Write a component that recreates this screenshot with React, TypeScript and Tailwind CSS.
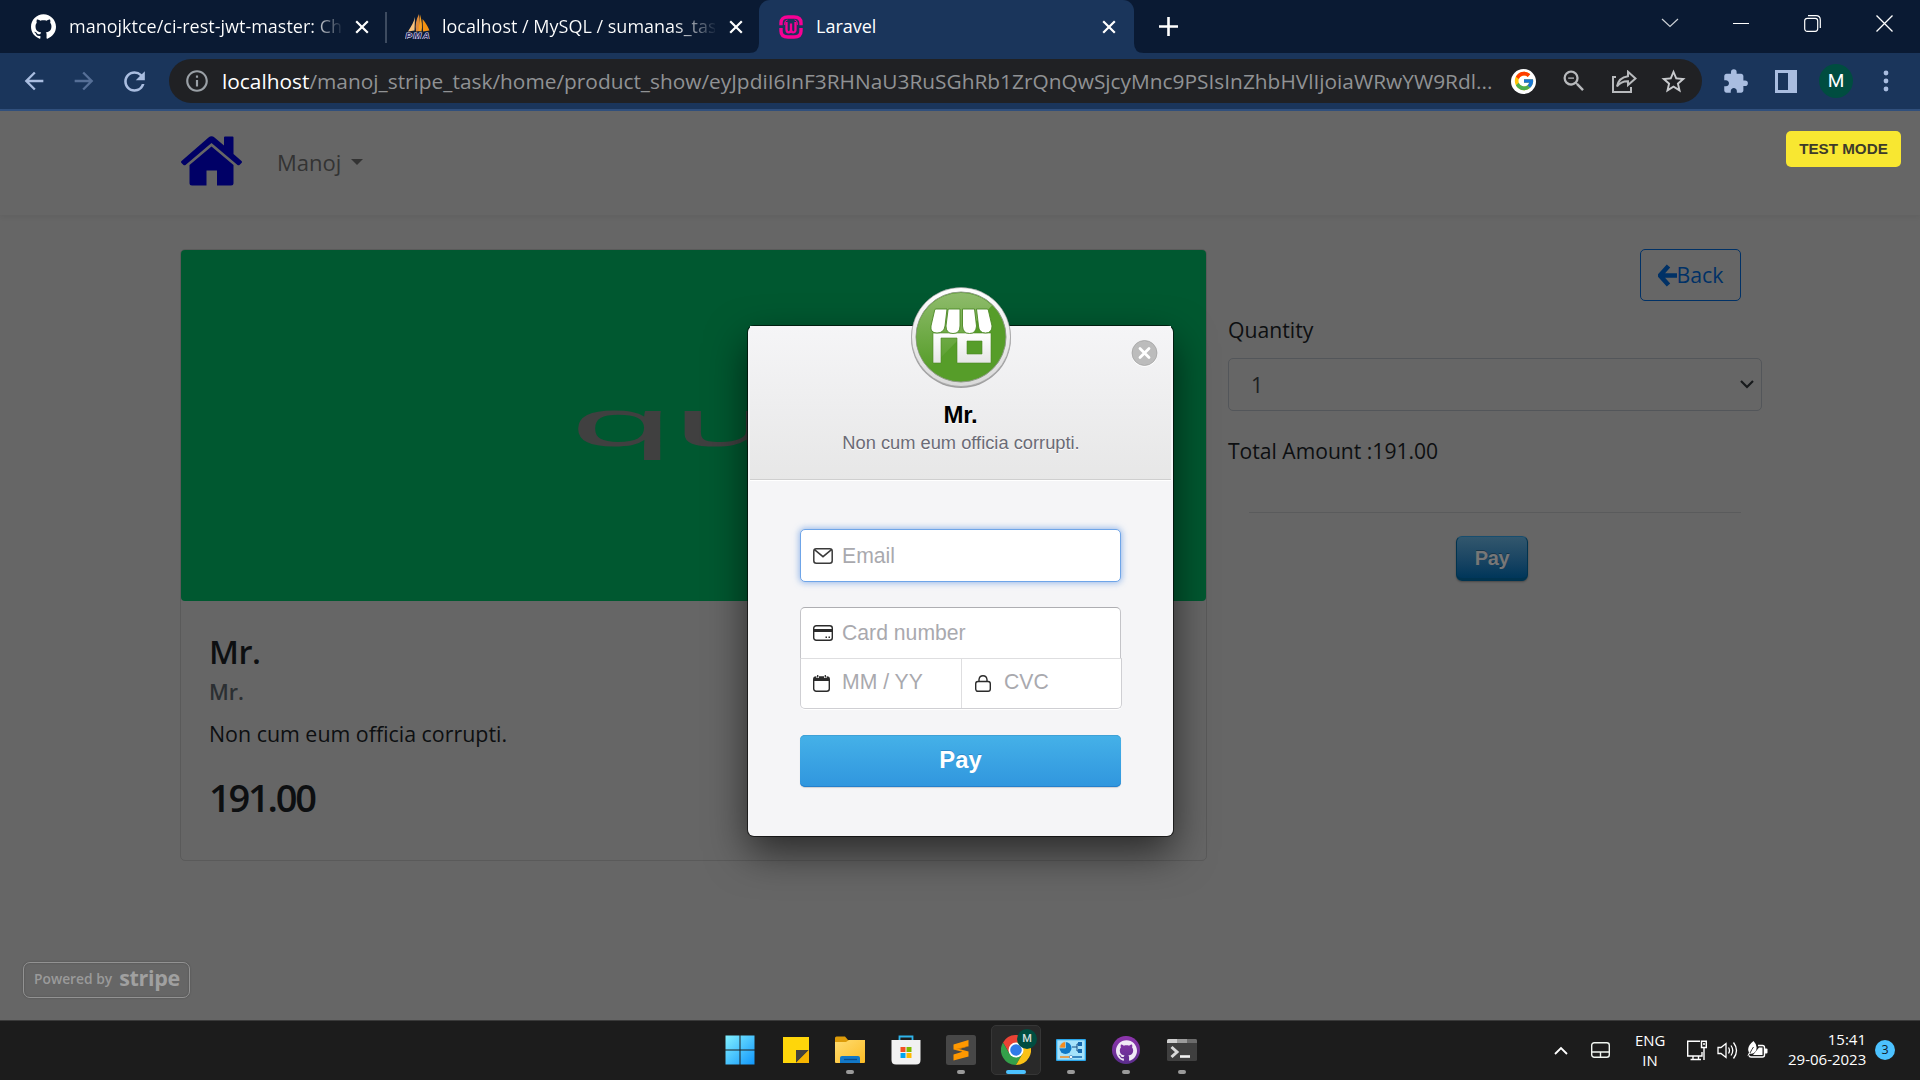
import React from 'react';
import { FaArrowLeft } from 'react-icons/fa';
import { SiGithub } from 'react-icons/si';
import { FcGoogle } from 'react-icons/fc';
import { MdArrowBack, MdArrowForward, MdExtension, MdInfoOutline, MdRefresh, MdStarBorder, MdZoomOut } from 'react-icons/md';

function CloseX() {
  return (
    <svg className="h-[14px] w-[14px] shrink-0" viewBox="0 0 14 14">
      <path d="M1.2 1.2 12.8 12.8M12.8 1.2 1.2 12.8" stroke="#fff" strokeWidth="2.2" />
    </svg>
  );
}

function PmaIcon() {
  return (
    <svg className="h-[25px] w-[25px] shrink-0" viewBox="0 0 25 25">
      <path d="M10 3C9 8 6.500 12 3 17.500L9.500 16.500Z" fill="#f9c27c" />
      <path d="M14 0C11 5.500 10 11 11 17.500L15 17Z" fill="#e08a3a" />
      <path d="M15 0.500C17 7 17.500 12 16.500 17.500L13.500 17Z" fill="#f7a020" />
      <path d="M17.500 5C21 9 23 13 24.500 16.500L18 17.500Z" fill="#f29111" />
      <text x="0.500" y="24.600" fontFamily="Liberation Sans" fontSize="9.500" fontWeight="700" fontStyle="italic" fill="#2a2a66" stroke="#d6d6ea" strokeWidth="1.200" paintOrder="stroke" textLength="24">PMA</text>
    </svg>
  );
}

function WampIcon() {
  return (
    <svg className="h-[24px] w-[24px] shrink-0" viewBox="0 0 24 24" fill="none" stroke="#f70094">
      <path d="M2 10.300V8Q2 2 9 2H15Q22 2 22 8V10.300" strokeWidth="3.400" />
      <path d="M2 13V16Q2 22 9 22H15Q22 22 22 16V13" strokeWidth="3.400" />
      <path d="M5.700 10V8Q6 5.200 8.500 5M18.300 10V8Q18 5.200 15.500 5" strokeWidth="1" />
      <path d="M7.500 7V14.500Q7.500 17.300 9.700 17.300T12 14.500V8.500M12 14.500Q12 17.300 14.300 17.300T16.500 14.500V7" strokeWidth="2.300" />
    </svg>
  );
}

function TabStrip() {
  return (
    <div className="flex h-[53px] bg-[#0a1a33] text-[18px] text-white">
      <div className="flex h-[53px] w-[385px] items-center pl-[31px]">
        <SiGithub className="h-[25px] w-[25px] shrink-0" />
        <span className="ml-[13px] w-[275px] overflow-hidden whitespace-nowrap bg-[linear-gradient(90deg,#fff_88%,#0a1a33_100%)] bg-clip-text text-transparent">
          manojktce/ci-rest-jwt-master: Ch
        </span>
        <span className="ml-[11px]"><CloseX /></span>
      </div>
      <div className="mt-[12px] h-[31px] w-[2px] bg-[#3d4b60]" />
      <div className="flex h-[53px] w-[362px] items-center pl-[18px]">
        <PmaIcon />
        <span className="ml-[12px] w-[273px] overflow-hidden whitespace-nowrap bg-[linear-gradient(90deg,#fff_85%,#0a1a33_101%)] bg-clip-text text-transparent">
          localhost / MySQL / sumanas_tas
        </span>
        <span className="ml-[14px]"><CloseX /></span>
      </div>
      <svg className="h-[53px] w-[10px]" viewBox="0 0 10 53"><path d="M10 43V53H0Q10 53 10 43Z" fill="#1a355b" /></svg>
      <div className="flex h-[53px] w-[375px] items-center rounded-t-[11px] bg-[#1a355b] pl-[20px]">
        <WampIcon />
        <span className="ml-[13px] w-[280px]">Laravel</span>
        <span className="ml-[6px]"><CloseX /></span>
      </div>
      <svg className="h-[53px] w-[10px]" viewBox="0 0 10 53"><path d="M0 43V53H10Q0 53 0 43Z" fill="#1a355b" /></svg>
      <svg className="ml-[15px] mt-[17px] h-[19px] w-[19px]" viewBox="0 0 19 19"><path d="M9.500 0V19M0 9.500H19" stroke="#fff" strokeWidth="2.600" /></svg>
      <div className="ml-auto flex h-[46px] items-center pr-[27px]">
        <svg className="mr-[54px] h-[10px] w-[18px]" viewBox="0 0 18 10"><path d="M1 1 9 8.500 17 1" fill="none" stroke="#cdd1d6" strokeWidth="1.200" /></svg>
        <div className="mr-[55px] h-px w-[16px] bg-white" />
        <svg className="mr-[55px] h-[17px] w-[17px]" viewBox="0 0 17 17" fill="none" stroke="#fff" strokeWidth="1.200">
          <rect x="0.700" y="3.300" width="13" height="13" rx="2.500" />
          <path d="M4 0.700H12Q16.300 0.700 16.300 5V13" />
        </svg>
        <svg className="h-[17px] w-[17px]" viewBox="0 0 17 17"><path d="M0.500 0.500 16.500 16.500M16.500 0.500 0.500 16.500" stroke="#fff" strokeWidth="1.300" /></svg>
      </div>
    </div>
  );
}

function Toolbar() {
  return (
    <div className="flex h-[58px] items-center border-b-2 border-[#31507d] bg-[#1a355b] pl-[20px] text-[#a9bde0]">
      <MdArrowBack className="h-[28px] w-[28px]" />
      <MdArrowForward className="ml-[22px] h-[28px] w-[28px] text-[#566f97]" />
      <MdRefresh className="ml-[21px] h-[31px] w-[31px]" />
      <div className="ml-[19px] flex h-[44px] w-[1533px] items-center rounded-full bg-[#202124] pl-[15px] text-[20.860px] text-[#9aa0a6]">
        <MdInfoOutline className="h-[26px] w-[26px]" />
        <div className="ml-[12px] w-[1286px] whitespace-nowrap pt-[2px] text-[#909294]">
          <span className="text-white">localhost</span>/manoj_stripe_task/home/product_show/eyJpdiI6InF3RHNaU3RuSGhRb1ZrQnQwSjcyMnc9PSIsInZhbHVlIjoiaWRwYW9Rdl...
        </div>
        <span className="ml-[3px] flex h-[25px] w-[25px] items-center justify-center rounded-full bg-white"><FcGoogle className="h-[22px] w-[22px]" /></span>
        <MdZoomOut className="ml-[24px] h-[28px] w-[28px] text-[#b8babd]" />
        <svg className="ml-[24px] h-[23px] w-[25px]" viewBox="0 0 25 23" fill="none" stroke="#b8babd" strokeWidth="2">
          <path d="M4 7H1V22H19V17" />
          <path d="M16 1.800 23.500 8.500 16 15V11.200Q9 11 5 16.500Q6.500 7.500 16 6.200Z" />
        </svg>
        <MdStarBorder className="ml-[22px] h-[29px] w-[29px] text-[#c8cacd]" />
      </div>
      <MdExtension className="ml-[20px] h-[27px] w-[27px]" />
      <div className="ml-[26px] h-[23px] w-[22px] border-[3px] border-r-[9px] border-[#a9bde0]" />
      <div className="ml-[22px] flex h-[34px] w-[34px] items-center justify-center rounded-full bg-[#004d40] pt-[1px] font-[Roboto] text-[19px] text-white">M</div>
      <svg className="ml-[30px] h-[22px] w-[6px]" viewBox="0 0 6 22" fill="#a9bde0"><circle cx="3" cy="3" r="2.400" /><circle cx="3" cy="11" r="2.400" /><circle cx="3" cy="19" r="2.400" /></svg>
    </div>
  );
}

function Page() {
  return (
    <div className="h-[909px] bg-[#666] text-[#0d0f11]">
      <nav className="flex h-[104px] items-center pb-[1px] pl-[181px] shadow-[0_2px_5px_rgba(0,0,0,0.06)]">
        <svg className="mb-[3px] h-[50px] w-[61px]" viewBox="0 0 61 50" fill="#000066">
          <path d="M27.500 1.500Q30.500-1 33.500 1.500L43 9.500V1.500Q43 0.500 44 0.500H51.500Q52.500 0.500 52.500 1.500V18L60.500 25Q61.500 26 60.500 27L58.500 29Q57.500 29.500 56.500 29L30.500 7 4.500 29Q3.500 29.500 2.500 29L0.500 27Q-0.500 26 0.500 25Z" />
          <path d="M30.500 10.500 52.500 29V47Q52.500 49.500 50 49.500H36V34.500H25.500V49.500H11Q8.500 49.500 8.500 47V29Z" />
        </svg>
        <span className="ml-[35px] text-[22px] text-[#333]">Manoj</span>
        <span className="ml-[10px] mb-[2px] border-x-[6px] border-t-[6px] border-x-transparent border-t-[#333]" />
      </nav>
      <main className="flex pl-[180px] pt-[34px]">
        <section className="h-[612px] w-[1027px] rounded-[5px] border border-[#5a5a5a]">
          <div className="flex h-[351px] items-center justify-center rounded-[4px] bg-[#005830]">
            <span className="mb-[5px] inline-block scale-x-[2.78] text-[66px] leading-[80px] text-[#404040] [font-family:'Liberation_Sans',sans-serif]">qui</span>
          </div>
          <div className="pl-[28px]">
            <h4 className="mt-[31px] text-[32.500px] leading-[40px] font-semibold tracking-[-0.500px]">Mr.</h4>
            <h6 className="mt-[6px] text-[21.500px] leading-[28px] font-semibold text-[#2b2f32]">Mr.</h6>
            <p className="mt-[13px] text-[21.400px] leading-[30px]">Non cum eum officia corrupti.</p>
            <h2 className="mt-[24px] text-[38px] leading-[48px] font-semibold tracking-[-2.200px]">191.00</h2>
          </div>
        </section>
        <section className="ml-[21px] w-[534px]">
          <div className="flex justify-end pr-[21px]">
            <button className="flex h-[52px] w-[101px] items-center justify-center rounded-[5px] border border-[#003166] text-[21.300px] text-[#003166]">
              <svg className="h-[23px] w-[19px]" viewBox="0 0 19 23"><path d="M10.500 2 2 11.500 10.500 21M3 11.500H19" fill="none" stroke="#003166" strokeWidth="4.600" /></svg>Back
            </button>
          </div>
          <div className="mt-[13px] text-[21.200px] leading-[32px]">Quantity</div>
          <div className="mt-[12px] flex h-[53px] items-center justify-between rounded-[5px] border border-[#53565a] pr-[7px] pl-[22px] text-[21.200px] text-[#1d2022]">
            <span>1</span>
            <svg className="h-[9px] w-[14px]" viewBox="0 0 14 9"><path d="M1 1 7 7 13 1" fill="none" stroke="#17191b" strokeWidth="2.200" /></svg>
          </div>
          <div className="mt-[24px] text-[21.100px] leading-[32px]">Total Amount :191.00</div>
          <div className="mx-[21px] mt-[45px] h-px bg-[#5a5b5c]" />
          <div className="mt-[23px] flex justify-center pr-[6px]">
            <button className="h-[45px] w-[72px] rounded-[6px] border border-b-[3px] border-[#00334f] border-t-[#174d6e] bg-gradient-to-b from-[#32576d] to-[#00365a] text-[20px] leading-[40px] font-bold tracking-[-0.300px] text-[#777] shadow-[0_1px_2px_rgba(0,0,0,0.3)] [font-family:'Liberation_Sans',sans-serif] [text-shadow:0_-1px_0_rgba(0,0,0,0.3)]">Pay</button>
          </div>
        </section>
      </main>
    </div>
  );
}

function StoreBadge() {
  return (
    <svg className="h-[106px] w-[106px]" viewBox="-53 -53 106 106">
      <defs>
        <linearGradient id="rim" x1="0" y1="0" x2="0" y2="1"><stop offset="0" stopColor="#fff" /><stop offset="1" stopColor="#d9d9d9" /></linearGradient>
        <linearGradient id="shine" x1="0" y1="0" x2="0" y2="1"><stop offset="0" stopColor="#8ebb6b" /><stop offset="1" stopColor="#569d29" /></linearGradient>
        <linearGradient id="shop" x1="0" y1="0" x2="0" y2="1"><stop offset="0" stopColor="#fff" /><stop offset="1" stopColor="#e6e6e6" /></linearGradient>
      </defs>
      <circle cy="1" r="50" fill="#00000055" />
      <circle r="49.500" fill="url(#rim)" stroke="#999" strokeWidth="0.600" />
      <circle r="45" fill="#569d29" stroke="#8d9a84" strokeWidth="1" />
      <path d="M-44.500 0A44.500 44.500 0 0 1 31-31.500L-31 31.500A44.500 44.500 0 0 1-44.500 0Z" fill="url(#shine)" />
      <path d="M-28-4H30V26H-4V1H-20V26H-28ZM6 4V17H21V4Z" fill="url(#shop)" fillRule="evenodd" stroke="#4b8824" strokeWidth="0.600" />
      <g fill="#fff" stroke="#4b8824" strokeWidth="0.900">
        <path d="M-25-28Q-26-28-26.300-27L-30-11Q-31-4-24-4T-16-11L-14-28Z" />
        <path d="M-12-28Q-13-28-13-27L-15-11Q-15-3.500-8-3.500T-1-11V-28Z" />
        <path d="M1.500-28V-11Q2-3.500 8.500-3.500T15.500-11L13.500-28Z" />
        <path d="M15.500-28 17.500-11Q18-4 24.500-4T31-11L27.300-27Q27-28 26-28Z" />
      </g>
    </svg>
  );
}

function MailIcon() {
  return (
    <svg className="h-[16px] w-[20px]" viewBox="0 0 20 16" fill="none" stroke="#3a3a3a" strokeWidth="1.500"><rect x="0.800" y="0.800" width="18.400" height="14.400" rx="2.500" /><path d="M1.500 1.700 10 8.700 18.500 1.700" /></svg>
  );
}
function CardIcon() {
  return (
    <svg className="h-[16px] w-[20px]" viewBox="0 0 20 16" fill="none" stroke="#2b2b2b" strokeWidth="1.400"><rect x="0.700" y="0.700" width="18.600" height="14.600" rx="2.500" /><path d="M1 5.500H19" strokeWidth="3" /><path d="M12.500 12.300H14M15.500 12.300H17" /></svg>
  );
}
function CalendarIcon() {
  return (
    <svg className="h-[17px] w-[17px]" viewBox="0 0 17 17" fill="none" stroke="#2b2b2b" strokeWidth="1.400"><rect x="0.700" y="2" width="15.600" height="14.300" rx="2.500" /><path d="M1 4H16" strokeWidth="4" /><path d="M4.700 0V3M12.300 0V3" stroke="#fff" strokeWidth="2.600" /><path d="M4.700 0V2.500M12.300 0V2.500" strokeWidth="1.300" /></svg>
  );
}
function LockIcon() {
  return (
    <svg className="h-[17px] w-[16px]" viewBox="0 0 16 17" fill="none" stroke="#2b2b2b" strokeWidth="1.400"><rect x="0.700" y="6.500" width="14.600" height="9.800" rx="2.200" /><path d="M4 6.500V4.500Q4.500 0.700 8 0.700T12 4.500V6.500" /></svg>
  );
}

function CheckoutModal() {
  return (
    <div className="relative h-[510px] w-[425px] rounded-[6px] bg-[#f5f5f7] shadow-[0_0_0_1px_rgba(0,0,0,0.6),0_16px_40px_rgba(0,0,0,0.6)] [font-family:'Liberation_Sans',sans-serif]">
      <div className="absolute top-[-42.500px] left-[159.500px]"><StoreBadge /></div>
      <svg className="absolute top-[14px] left-[383px] h-[27px] w-[27px]" viewBox="0 0 27 27">
        <circle cx="13.500" cy="14" r="12.800" fill="#fff" />
        <circle cx="13.500" cy="13" r="12.500" fill="#bcbcbc" stroke="#9e9e9e" strokeWidth="0.700" />
        <path d="M9 8.500 18 17.500M18 8.500 9 17.500" stroke="#fff" strokeWidth="2.800" strokeLinecap="round" />
      </svg>
      <header className="mx-[2px] flex h-[154px] flex-col items-center border-b border-[#cfcfcf] bg-gradient-to-b from-[#f5f5f7] to-[#e7e7e7] pt-[76px] shadow-[0_1px_0_#fff]">
        <h1 className="text-[24px] leading-[26px] font-bold tracking-[-0.300px] text-black [text-shadow:0_1px_0_#fff]">Mr.</h1>
        <h2 className="mt-[4px] pl-[1px] text-[18.300px] leading-[22px] text-[#6b6b76] [text-shadow:0_1px_0_#fff]">Non cum eum officia corrupti.</h2>
      </header>
      <form className="mx-[52px] mt-[49px] text-[21.200px] text-[#a9a9ae]">
        <div className="flex h-[53px] w-[321px] items-center rounded-[5px] border border-[#6fa5e8] bg-white pl-[12px] shadow-[0_0_6px_1px_rgba(90,145,225,0.6)]">
          <MailIcon /><span className="ml-[9px]">Email</span>
        </div>
        <div className="mt-[25px] flex h-[51px] w-[321px] items-center rounded-t-[5px] border border-b-0 border-[#c4c4c8] border-t-[#aeaeb2] bg-white pl-[12px]">
          <CardIcon /><span className="mb-[1px] ml-[9px]">Card number</span>
        </div>
        <div className="flex h-[51px] w-[322px] rounded-b-[5px] border border-[#cfcfd3] border-t-[#dedee0] bg-white shadow-[0_1px_0_#fff]">
          <div className="flex w-[161px] items-center border-r border-[#dedee0] pl-[12px]">
            <CalendarIcon /><span className="mb-[4px] ml-[12px]">MM / YY</span>
          </div>
          <div className="flex items-center pl-[13px]">
            <LockIcon /><span className="mb-[4px] ml-[13px]">CVC</span>
          </div>
        </div>
        <button type="button" className="mt-[26px] h-[52px] w-[321px] rounded-[5px] bg-gradient-to-b from-[#45b1e8] to-[#3096de] pb-[3px] text-[23.800px] leading-[49px] font-bold text-white shadow-[inset_0_1px_0_#3fa1d6,inset_0_-1px_0_#2580cc,0_1px_1px_rgba(0,0,0,0.15)] [text-shadow:0_-1px_0_rgba(20,90,160,0.4)]">Pay</button>
      </form>
    </div>
  );
}

function CheckoutOverlay() {
  return (
    <div className="absolute inset-x-0 top-[111px] h-[909px] overflow-hidden">
      <div className="flex h-full items-start justify-center pt-[215px] pl-px"><div><CheckoutModal /></div></div>
      <div className="absolute top-[20px] right-[19px] flex h-[36px] w-[115px] items-center justify-center rounded-[5px] bg-[#f8e731] pt-[1px] text-[15.200px] font-bold text-[#3d3b2a] [font-family:'Liberation_Sans',sans-serif]">TEST MODE</div>
      <div className="absolute top-[851px] left-[23px] flex h-[36px] w-[167px] items-center rounded-[7px] border-[1.500px] border-[#929292] pl-[10px] text-[#9a9a9a] shadow-[0_0_2px_rgba(0,0,0,0.25),inset_0_0_2px_rgba(0,0,0,0.25)]">
        <span className="mb-[1px] text-[13.800px] font-semibold">Powered by</span>
        <span className="mb-[4px] ml-[7px] text-[21.500px] leading-[26px] font-bold tracking-[-0.300px] text-[#a0a0a0]">stripe</span>
      </div>
    </div>
  );
}

function TaskItem({ children, running = false, active = false }: { children: React.ReactNode; running?: boolean; active?: boolean }) {
  return (
    <div className={active ? 'relative flex h-[50px] w-[50px] items-center justify-center rounded-[5px] border border-[#363636] bg-[#292929]' : 'relative flex h-[50px] w-[50px] items-center justify-center'}>
      {children}
      {running && <span className="absolute top-[45px] h-[4px] w-[8px] rounded-full bg-[#9a9a9a]" />}
      {active && <span className="absolute top-[44px] h-[4px] w-[20px] rounded-full bg-[#4cc2ff]" />}
    </div>
  );
}

function Taskbar() {
  return (
    <div className="flex h-[60px] items-center border-t border-[#3a3a3a] bg-[#1c1c1c] pb-[1px] text-[15px] text-white">
      <div className="ml-[715px] flex gap-[5.200px]">
        <TaskItem>
          <svg className="h-[30px] w-[30px]" viewBox="0 0 30 30">
            <defs><linearGradient id="win" gradientUnits="userSpaceOnUse" x1="0" y1="0" x2="30" y2="30"><stop offset="0" stopColor="#84f2ff" /><stop offset="1" stopColor="#0f95fb" /></linearGradient></defs>
            <path d="M0.500 0.500H14.500V14.500H0.500ZM15.500 0.500H29.500V14.500H15.500ZM0.500 15.500H14.500V29.500H0.500ZM15.500 15.500H29.500V29.500H15.500Z" fill="url(#win)" />
          </svg>
        </TaskItem>
        <TaskItem>
          <svg className="ml-[2px] h-[28px] w-[28px]" viewBox="0 0 28 28"><path d="M1 1H27V27H1Z" fill="#ffd60a" /><path d="M14 14H27L14 27Z" fill="#44413c" /><path d="M27 14V27H14Z" fill="#f7b500" /></svg>
        </TaskItem>
        <TaskItem running>
          <svg className="h-[28px] w-[30px]" viewBox="0 0 30 28">
            <defs><linearGradient id="fold" x1="0" y1="0" x2="1" y2="1"><stop offset="0" stopColor="#ffdc70" /><stop offset="1" stopColor="#fcbc25" /></linearGradient></defs>
            <path d="M0 2Q0 0.500 1.500 0.500H10L13 4H29V10H0Z" fill="#dd9b09" /><path d="M0 6H11L14 4H30V26Q30 27 29 27H1Q0 27 0 26Z" fill="url(#fold)" /><path d="M5 27V22Q5 20 7 20H23Q25 20 25 22V27Z" fill="#1278c8" /><path d="M9 23.500H22" stroke="#0a4c8c" strokeWidth="1.300" />
          </svg>
        </TaskItem>
        <TaskItem>
          <svg className="h-[30px] w-[30px]" viewBox="0 0 30 30"><path d="M8.500 6V1.500H21.500V6" fill="none" stroke="#2fb4ea" strokeWidth="1.800" /><path d="M0.500 5H29.500V25Q29.500 29.500 25 29.500H5Q0.500 29.500 0.500 25Z" fill="#f1f1f1" /><path d="M9.500 12H14.500V17H9.500Z" fill="#f25022" /><path d="M15.500 12H20.500V17H15.500Z" fill="#7fba00" /><path d="M9.500 18H14.500V23H9.500Z" fill="#00a4ef" /><path d="M15.500 18H20.500V23H15.500Z" fill="#ffb900" /></svg>
        </TaskItem>
        <TaskItem running>
          <svg className="h-[30px] w-[30px]" viewBox="0 0 30 30"><rect width="30" height="30" rx="2.500" fill="#474747" /><path d="M22.500 5V11L13 14 22.500 16.500V21.500L7.500 25.500V19.500L16.500 16.800 7.500 14.500V9.500Z" fill="#ff9800" /><path d="M7.500 14.500 22.500 11V11.500L13 14Z" fill="#d97b00" /></svg>
        </TaskItem>
        <TaskItem active>
          <svg className="h-[30px] w-[30px]" viewBox="-15 -15 30 30">
            <path d="M-13-7.500A15 15 0 0 1 13-7.500H0L-6.500 3.700Z" fill="#ea4335" />
            <path d="M-13-7.500A15 15 0 0 0 0 15L6.500 3.700H-6.500Z" fill="#34a04a" />
            <path d="M13-7.500A15 15 0 0 1 0 15L6.500 3.700 0-7.500Z" fill="#fbc116" />
            <circle r="7.500" fill="#fff" /><circle r="5.800" fill="#2f7be8" />
          </svg>
          <span className="absolute top-[3px] left-[25px] flex h-[20px] w-[20px] items-center justify-center rounded-full bg-[#004d40] font-[Roboto] text-[11px] font-medium text-[#d5dedc]">M</span>
        </TaskItem>
        <TaskItem running>
          <svg className="h-[22px] w-[30px]" viewBox="0 0 30 22"><rect width="30" height="22" rx="1" fill="#2aa6ea" /><rect x="1.300" y="1.300" width="27.400" height="19.400" fill="#a5e2fb" /><circle cx="9.500" cy="9" r="6" fill="#0f78c6" /><path d="M9.500 9V2.500A6.500 6.500 0 0 0 3.500 9Z" fill="#f58b1f" stroke="#a5e2fb" strokeWidth="0.700" /><path d="M16 8H21M21 5V12M21 5H23M21 12H23" fill="none" stroke="#174f86" /><path d="M22 3H26V7H22ZM22 10H26V14H22Z" fill="#1467ae" /><path d="M4 18H14" stroke="#f58b1f" strokeWidth="1.500" /><path d="M15 18H26" stroke="#1467ae" strokeWidth="1.500" /><circle cx="15" cy="18" r="1.600" fill="#fff" stroke="#1467ae" strokeWidth="0.500" /></svg>
        </TaskItem>
        <TaskItem running>
          <span className="flex h-[28px] w-[28px] items-center justify-center rounded-full bg-gradient-to-b from-[#8e35ad] to-[#5b2d8c]"><SiGithub className="h-[21px] w-[21px] text-[#f0eaf6]" /></span>
        </TaskItem>
        <TaskItem running>
          <svg className="h-[22px] w-[30px]" viewBox="0 0 30 22"><rect width="30" height="22" rx="1.500" fill="#3f3f3f" /><path d="M0 4V1.500Q0 0 1.500 0H10V4Z" fill="#cfcfcf" /><path d="M10 0H20V4H10Z" fill="#9b9b9b" /><path d="M20 0H28.500Q30 0 30 1.500V4H20Z" fill="#6b6b6b" /><path d="M4.500 8 10 13 4.500 18" fill="none" stroke="#dadada" strokeWidth="3" /><path d="M13 17.500H23" stroke="#f2f2f2" strokeWidth="2.600" /></svg>
        </TaskItem>
      </div>
      <div className="ml-auto flex items-center pr-[25px]">
        <svg className="h-[9px] w-[14px]" viewBox="0 0 14 9"><path d="M1 8 7 2 13 8" fill="none" stroke="#fff" strokeWidth="1.800" /></svg>
        <svg className="ml-[23px] h-[16px] w-[19px]" viewBox="0 0 19 16" fill="none" stroke="#f0f5f0" strokeWidth="1.400"><rect x="0.700" y="0.700" width="17.600" height="14.600" rx="2.500" /><path d="M1 10H18M9.500 10V15" /></svg>
        <div className="ml-[25px] w-[30px] text-center text-[14.900px] leading-[20px]">ENG<br />IN</div>
        <svg className="ml-[21px] h-[21px] w-[22px]" viewBox="0 0 22 21" fill="none" stroke="#fff" strokeWidth="1.400"><path d="M14 1.200H1.700V16H16V12M4.500 19.500H15M7 16V19.500M12.500 16V19.500" /><path d="M15.500 1.200H20.300V7.500H15.500ZM18 7.500V20M17 4H19" /></svg>
        <svg className="ml-[9px] h-[19px] w-[21px]" viewBox="0 0 21 19" fill="none" stroke="#fff" strokeWidth="1.300"><path d="M1 6.500H4L9 2.500V16.500L4 12.500H1Z" /><path d="M11.500 6.500Q13.500 9.500 11.500 12.500M14 4.500Q17.500 9.500 14 14.500M16.500 1.500Q22.500 9.500 16.500 17.500" /></svg>
        <svg className="ml-[9px] h-[18px] w-[21px]" viewBox="0 0 21 18"><path d="M11 4.500H15.500Q17.500 4.500 17.500 6.500V14Q17.500 16 15.500 16H4Q2.500 16 2 14.500" fill="none" stroke="#fff" strokeWidth="1.400" /><path d="M18 7.500H19.500Q20.500 7.500 20.500 8.500V11.500Q20.500 12.500 19.500 12.500H18Z" fill="#fff" /><path d="M12 6.500H15.500V14H6Z" fill="#fff" /><path d="M6.500 0Q11.500 5 8.500 10.500Q6 13.500 3 12.500L1 15 0.500 14.500 2 11.500Q-1 6 6.500 0Z" fill="#fff" /><path d="M3 12Q5 8 6.500 6" stroke="#1c1c1c" strokeWidth="0.900" fill="none" /></svg>
        <div className="mb-[3px] ml-[20px] w-[78px] whitespace-nowrap text-right leading-[20px]">15:41<br />29-06-2023</div>
        <div className="ml-[9px] flex h-[20px] w-[20px] items-center justify-center rounded-full bg-[#4cc2ff] text-[12.500px] text-[#10202b]">3</div>
      </div>
    </div>
  );
}

export default function App() {
  return (
    <div className="relative h-[1080px] w-[1920px] overflow-hidden [font-family:'Open_Sans','Noto_Sans',sans-serif]">
      <TabStrip />
      <Toolbar />
      <Page />
      <CheckoutOverlay />
      <Taskbar />
    </div>
  );
}
